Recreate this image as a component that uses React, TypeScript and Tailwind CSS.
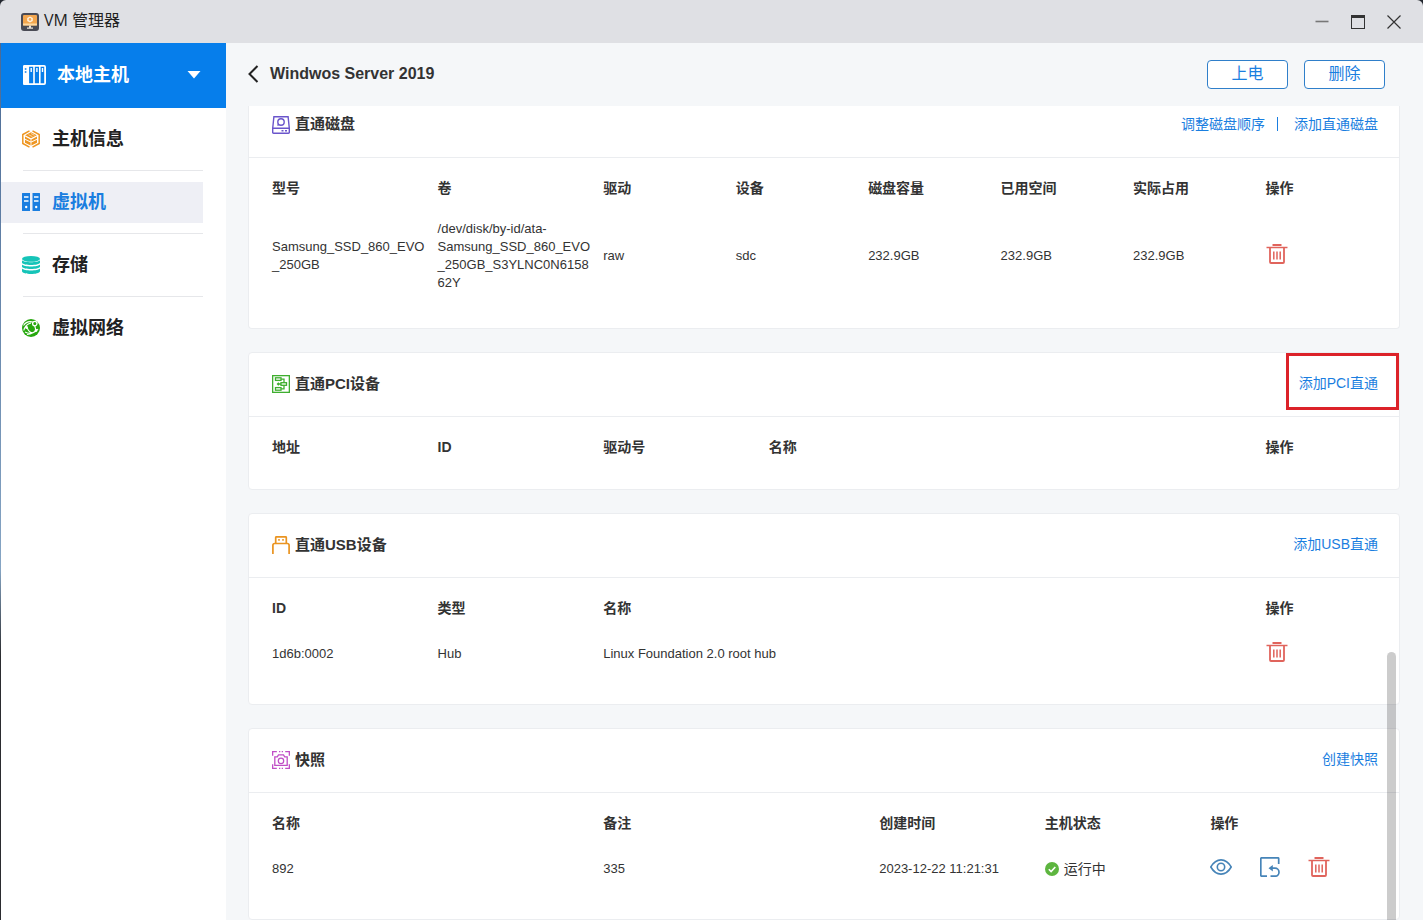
import type { ReactNode } from "react";

function AppLogo() {
  return (
    <svg width="18" height="18" viewBox="0 0 18 18" aria-hidden="true">
      <rect width="18" height="18" rx="3" fill="#4a4b55" />
      <rect x="2" y="2" width="14" height="10.5" rx="1" fill="#f3a64e" />
      <rect x="2" y="10.5" width="14" height="2" fill="#ffd9a0" />
      <path d="M9 3.4l2.8 1.5v3L9 9.400 6.200 7.900v-3z" fill="#fff1dc" />
      <circle cx="9" cy="6.400" r="1.300" fill="#f3a64e" />
      <path d="M8 12.500h2v2h2v1.200H6v-1.200h2z" fill="#e9e2d8" />
    </svg>
  );
}

function HostIcon() {
  return (
    <svg width="23" height="20" viewBox="0 0 23 20" fill="none" aria-hidden="true">
      <path d="M1.500 0H5V20H1.500A1.500 1.500 0 0 1 0 18.500V1.500A1.500 1.500 0 0 1 1.500 0z" fill="#fff" />
      <rect x="0.900" y="0.900" width="21.200" height="18.200" rx="1" stroke="#fff" strokeWidth="1.800" />
      <path d="M5.300 1v18M11 1v18M16.800 1v18" stroke="#fff" strokeWidth="1.600" />
      <path d="M8.200 3v4M13.900 3v4M19.500 3v4" stroke="#fff" strokeWidth="1.400" />
      <path d="M1.800 4h1.600M1.800 7h1.600" stroke="#067eeb" strokeWidth="1.300" />
    </svg>
  );
}

function InfoIcon() {
  return (
    <svg width="18" height="18" viewBox="0 0 18 18" fill="none" aria-hidden="true">
      <path d="M7.500 0.800L0.800 4.500v9L7.500 17.200M10.500 0.800L17.200 4.500v9L10.500 17.200" stroke="#ee9622" strokeWidth="1.500" />
      <path d="M9 2.200l5.800 3L9 8.200l-5.800-3z" fill="#ee9622" />
      <path d="M3 6.600l5.600 2.800v2.100L3 8.700zM15 6.600L9.400 9.400v2.100L15 8.700z" fill="#ee9622" />
      <path d="M3 9.700l5.600 2.800v3L3 12.700zM15 9.700l-5.600 2.800v3l5.600-2.800z" fill="#ee9622" />
      <path d="M6.500 4.700l4 2M9 3.500l3.500 1.800" stroke="#fff" strokeWidth="0.600" />
    </svg>
  );
}

function VmIcon() {
  return (
    <svg width="18" height="18" viewBox="0 0 18 18" aria-hidden="true">
      <path d="M0.500 0H8v18H0.500a.5.500 0 0 1-.5-.5V.5a.5.500 0 0 1 .5-.5zM10.500 0h7a.5.500 0 0 1 .5.500v17a.5.500 0 0 1-.5.500h-7z" fill="#1a7ee0" />
      <path d="M2 4h4.500M2 8h4.500M12 4h4.500M12 8h4.500" stroke="#fff" strokeWidth="1.400" />
      <circle cx="4.200" cy="14" r="1.200" fill="#fff" />
      <circle cx="14.200" cy="14" r="1.200" fill="#fff" />
    </svg>
  );
}

function StorageIcon() {
  return (
    <svg width="18" height="18" viewBox="0 0 18 18" fill="#16c4b8" aria-hidden="true">
      <ellipse cx="9" cy="2.900" rx="9" ry="2.900" />
      <path d="M0 4.300c2 2.600 16 2.600 18 0v2.500c-1 3-17 3-18 0z" />
      <path d="M0 8.500c2 2.600 16 2.600 18 0v2.300c-1 3-17 3-18 0z" />
      <path d="M0 12.500c2 2.600 16 2.600 18 0v2.700c-1 3.700-17 3.700-18 0z" />
    </svg>
  );
}

function NetworkIcon() {
  return (
    <svg width="18" height="18" viewBox="0 0 18 18" fill="none" aria-hidden="true">
      <circle cx="9" cy="9" r="9" fill="#27a80e" />
      <path d="M1.500 6.500C4 2.800 8 2 11.500 3.300M1.800 11.500C2.500 8 5 5 9 4M3 13c3.500 2 8 1.500 11.500-1.500M5 15.500c4-.2 8-2 11-5.500M12.500 6l1.500 5.500M5 8.500c1 2.500 2 4.500 5 5.500" stroke="#fff" strokeWidth="1.100" />
      <circle cx="4.500" cy="8.500" r="1.400" fill="#fff" />
      <circle cx="12.800" cy="4.600" r="2.200" fill="#27a80e" stroke="#fff" strokeWidth="1.300" />
      <circle cx="14" cy="11.500" r="1.400" fill="#fff" />
    </svg>
  );
}

function DiskIcon() {
  return (
    <svg width="18" height="18" viewBox="0 0 18 18" fill="none" stroke="#6a55cb" strokeWidth="1.400" aria-hidden="true">
      <path d="M1.900 0.700h14.200l1.200 11.500v4.300a0.800 0.800 0 0 1-.8.800h-15a0.800 0.800 0 0 1-.8-.8v-4.300z" />
      <path d="M0.700 12.200h16.600M9.500 14.800h2M13 14.800h2" />
      <circle cx="9" cy="6" r="3.200" />
      <path d="M6.800 8.200L5.500 9.500" />
    </svg>
  );
}

function PciIcon() {
  return (
    <svg width="18" height="18" viewBox="0 0 18 18" fill="none" stroke="#3fae2f" strokeWidth="1.300" aria-hidden="true">
      <rect x="0.650" y="0.650" width="16.700" height="16.700" />
      <rect x="3.500" y="2.800" width="5.500" height="2.600" />
      <rect x="9" y="7.700" width="5.500" height="2.600" />
      <rect x="3.500" y="12.600" width="5.500" height="2.600" />
      <path d="M9 4.100h3v3.600M12 10.300v3.600H9M9 9H6M6.800 7.700L5.500 9l1.300 1.300" />
    </svg>
  );
}

function UsbIcon() {
  return (
    <svg width="18" height="18" viewBox="0 0 18 18" fill="none" stroke="#ea9420" strokeWidth="1.700" aria-hidden="true">
      <path d="M3.700 7.500V1.600a0.800 0.800 0 0 1 .8-.8h9a0.800 0.800 0 0 1 .8.800v5.900" />
      <path d="M0.900 18V9.300A1.800 1.800 0 0 1 2.700 7.500h12.600a1.800 1.800 0 0 1 1.800 1.800V18" />
      <path d="M6.200 3.800h1.600M10.200 3.800h1.600" />
    </svg>
  );
}

function SnapshotIcon() {
  return (
    <svg width="18" height="18" viewBox="0 0 18 18" fill="none" stroke="#c04fc6" strokeWidth="1.300" aria-hidden="true">
      <path d="M0.650 4.800V0.650h4.200M13.200 0.650h4.150v4.200M17.350 13.200v4.150h-4.150M4.800 17.350H0.650v-4.150M7 .65h1.300M9.700.65H11M7 17.350h1.300M9.700 17.350H11" />
      <path d="M2.800 5.800h2.500l1.200-2h5l1.200 2h2.500v8.600H2.800z" />
      <circle cx="9" cy="9.900" r="2.700" />
    </svg>
  );
}

function TrashIcon() {
  return (
    <svg width="22" height="20" viewBox="0 0 22 20" fill="none" stroke="#e0645c" aria-hidden="true">
      <path d="M6.500 1h9" strokeWidth="2" />
      <path d="M0.500 3.500h21" strokeWidth="1.500" />
      <path d="M4 3.500v14.500a1 1 0 0 0 1 1h12a1 1 0 0 0 1-1V3.500" strokeWidth="1.800" />
      <path d="M7.800 7.500v8M11 7.500v8M14.200 7.500v8" strokeWidth="1.500" />
    </svg>
  );
}

function EyeIcon() {
  return (
    <svg width="22" height="16" viewBox="0 0 22 16" fill="none" stroke="#4684b8" strokeWidth="1.600" aria-hidden="true">
      <path d="M0.800 8C3.500 3.300 7 0.900 11 0.900S18.500 3.300 21.200 8C18.500 12.700 15 15.100 11 15.100S3.500 12.700 0.800 8z" />
      <circle cx="11" cy="8" r="3.700" />
    </svg>
  );
}

function RestoreIcon() {
  return (
    <svg width="20" height="20" viewBox="0 0 20 20" fill="none" stroke="#4684b8" strokeWidth="1.700" aria-hidden="true">
      <path d="M18.700 7V1.600a.8.800 0 0 0-.8-.8H1.600a.8.800 0 0 0-.8.800v16.800a.8.800 0 0 0 .8.800H7" />
      <path d="M10.500 11.200H15a4 4 0 0 1 0 8h-4.500" />
      <path d="M12.800 8v6.400L8.500 11.200z" fill="#4684b8" stroke="none" />
    </svg>
  );
}

const menu = [
  { label: "主机信息", icon: <InfoIcon /> },
  { label: "虚拟机", icon: <VmIcon />, active: true },
  { label: "存储", icon: <StorageIcon /> },
  { label: "虚拟网络", icon: <NetworkIcon /> },
];

function Sidebar() {
  return (
    <aside className="w-[225px] shrink-0 bg-white">
      <button className="flex h-[65px] w-full items-center bg-[#067eeb] pb-0.5 pl-[22px] pr-[25px] text-white">
        <HostIcon />
        <span className="ml-[11px] text-lg font-bold">本地主机</span>
        <svg className="ml-auto" width="14" height="8" viewBox="0 0 14 8" aria-hidden="true">
          <path d="M0.500 0h13L7 7.500z" fill="#fff" />
        </svg>
      </button>
      <nav>
        <ul>
          {menu.map((item) => (
            <li key={item.label} className="group mr-[23px] pt-[11px]">
              <a
                href="#"
                className={
                  item.active
                    ? "flex h-[41px] items-center gap-3 bg-[#eeeff5] pb-0.5 pl-[21px] text-lg font-bold text-[#1a7ee0]"
                    : "flex h-[41px] items-center gap-3 pb-0.5 pl-[21px] text-lg font-bold text-[#222]"
                }
              >
                {item.icon}
                {item.label}
              </a>
              <div className="ml-[22px] mt-2.5 border-b border-[#e6e7ea] group-last:hidden" />
            </li>
          ))}
        </ul>
      </nav>
    </aside>
  );
}

type SectionProps = {
  title: string;
  icon: ReactNode;
  actions: string[];
  scrolled?: boolean;
  marked?: boolean;
  children: ReactNode;
};

function Section({ title, icon, actions, scrolled, marked, children }: SectionProps) {
  return (
    <section
      className={
        scrolled
          ? "rounded-b border border-t-0 border-[#ebedf0] bg-white"
          : "rounded border border-[#ebedf0] bg-white"
      }
    >
      <div
        className={
          scrolled
            ? "flex h-[52px] items-center border-b border-[#ebedf0] pl-[23px] pr-[21px] pb-3.5"
            : "relative flex h-16 items-center border-b border-[#ebedf0] pl-[23px] pr-[21px] pb-px"
        }
      >
        {icon}
        <h2 className="ml-[5px] text-[15px] font-bold text-[#333]">{title}</h2>
        <div className="ml-auto flex items-center pb-0.5 text-sm text-[#1a7ee0]">
          {actions.map((action, i) => (
            <a key={action} href="#" className={i > 0 ? "ml-3 flex items-center gap-4" : ""}>
              {i > 0 && <span className="h-3.5 border-l border-[#1a7ee0]" />}
              {action}
            </a>
          ))}
        </div>
        {marked && (
          <div className="pointer-events-none absolute right-0 top-0 h-[57px] w-[113px] border-3 border-[#dc2229]" />
        )}
      </div>
      {children}
    </section>
  );
}

type TableProps = {
  columns: [string, string][];
  rows: ReactNode[][];
};

function DataTable({ columns, rows }: TableProps) {
  return (
    <div className={rows.length ? "px-[23px] pt-2 pb-7" : "px-[23px] pt-2 pb-[18px]"}>
      <table className="w-full table-fixed text-left text-[13px] leading-[18px] text-[#333]">
        <thead>
          <tr>
            {columns.map(([name, width]) => (
              <th key={name} className={`h-[46px] pb-0.5 text-sm leading-[18px] font-bold ${width}`}>
                {name}
              </th>
            ))}
          </tr>
        </thead>
        <tbody>
          {rows.map((row, i) => (
            <tr key={i}>
              {row.map((cell, j) => (
                <td key={j} className="h-11 py-2 pr-2 align-middle wrap-anywhere">
                  {cell}
                </td>
              ))}
            </tr>
          ))}
        </tbody>
      </table>
    </div>
  );
}

function DeleteButton() {
  return (
    <button aria-label="删除" className="block pb-1">
      <TrashIcon />
    </button>
  );
}

export default function App() {
  return (
    <div className="flex h-screen flex-col bg-[#22262e] font-['Liberation_Sans','Noto_Sans_CJK_SC',sans-serif]">
      <header className="flex h-[43px] shrink-0 items-center rounded-t-md bg-[#dfe0e4] pl-[21px] pr-[22px]">
        <AppLogo />
        <h1 className="ml-[5px] pb-[3px] font-['Open_Sans','Noto_Sans_CJK_SC',sans-serif] text-base text-[#222]">
          VM 管理器
        </h1>
        <div className="ml-auto flex items-center gap-[22px]">
          <button aria-label="最小化">
            <svg width="14" height="14" viewBox="0 0 14 14" aria-hidden="true">
              <path d="M0.500 6.500h13" stroke="#777" strokeWidth="1.600" />
            </svg>
          </button>
          <button aria-label="最大化">
            <svg width="14" height="14" viewBox="0 0 14 14" fill="none" stroke="#333" aria-hidden="true">
              <rect x="0.500" y="0.500" width="13" height="13" />
              <path d="M0 1.500h14" strokeWidth="3" />
            </svg>
          </button>
          <button aria-label="关闭">
            <svg width="14" height="14" viewBox="0 0 14 14" stroke="#333" strokeWidth="1.200" aria-hidden="true">
              <path d="M0.500 0.500l13 13M13.500 0.500l-13 13" />
            </svg>
          </button>
        </div>
      </header>

      <div className="flex min-h-0 flex-1">
        <div className="w-px shrink-0 bg-linear-to-b from-[#4b6a94] via-[#86a5c4] via-60% to-[#2b2c30] to-70%" />
        <Sidebar />

        <main className="relative flex min-w-0 flex-1 flex-col bg-[#f5f7f9] pl-[22px] pr-[23px]">
          <div className="flex h-[63px] shrink-0 items-center">
            <button aria-label="返回" className="pb-0.5">
              <svg width="11" height="18" viewBox="0 0 11 18" fill="none" stroke="#222" strokeWidth="2" aria-hidden="true">
                <path d="M9.500 1L1.500 9l8 8" />
              </svg>
            </button>
            <h1 className="ml-[11px] pb-0.5 text-base font-bold text-[#333]">Windwos Server 2019</h1>
            <div className="ml-auto mr-[15px] flex gap-4 text-base text-[#1a7ee0]">
              <button className="h-[29px] w-[81px] rounded border border-[#2f7fca] bg-white pb-0.5 leading-none">
                上电
              </button>
              <button className="h-[29px] w-[81px] rounded border border-[#2f7fca] bg-white pb-0.5 leading-none">
                删除
              </button>
            </div>
          </div>

          <div className="flex min-h-0 flex-1 flex-col gap-[23px] overflow-hidden">
            <Section title="直通磁盘" icon={<DiskIcon />} actions={["调整磁盘顺序", "添加直通磁盘"]} scrolled>
              <DataTable
                columns={[
                  ["型号", "w-[15%]"],
                  ["卷", "w-[15%]"],
                  ["驱动", "w-[12%]"],
                  ["设备", "w-[12%]"],
                  ["磁盘容量", "w-[12%]"],
                  ["已用空间", "w-[12%]"],
                  ["实际占用", "w-[12%]"],
                  ["操作", "w-[10%]"],
                ]}
                rows={[
                  [
                    "Samsung_SSD_860_EVO_250GB",
                    "/dev/disk/by-id/ata-Samsung_SSD_860_EVO_250GB_S3YLNC0N615862Y",
                    "raw",
                    "sdc",
                    "232.9GB",
                    "232.9GB",
                    "232.9GB",
                    <DeleteButton />,
                  ],
                ]}
              />
            </Section>

            <Section title="直通PCI设备" icon={<PciIcon />} actions={["添加PCI直通"]} marked>
              <DataTable
                columns={[
                  ["地址", "w-[15%]"],
                  ["ID", "w-[15%]"],
                  ["驱动号", "w-[15%]"],
                  ["名称", "w-[45%]"],
                  ["操作", "w-[10%]"],
                ]}
                rows={[]}
              />
            </Section>

            <Section title="直通USB设备" icon={<UsbIcon />} actions={["添加USB直通"]}>
              <DataTable
                columns={[
                  ["ID", "w-[15%]"],
                  ["类型", "w-[15%]"],
                  ["名称", "w-[60%]"],
                  ["操作", "w-[10%]"],
                ]}
                rows={[["1d6b:0002", "Hub", "Linux Foundation 2.0 root hub", <DeleteButton />]]}
              />
            </Section>

            <Section title="快照" icon={<SnapshotIcon />} actions={["创建快照"]}>
              <DataTable
                columns={[
                  ["名称", "w-[30%]"],
                  ["备注", "w-[25%]"],
                  ["创建时间", "w-[15%]"],
                  ["主机状态", "w-[15%]"],
                  ["操作", "w-[15%]"],
                ]}
                rows={[
                  [
                    "892",
                    "335",
                    "2023-12-22 11:21:31",
                    <span className="flex items-center gap-[5px] text-sm leading-[18px]">
                      <svg width="14" height="14" viewBox="0 0 14 14" aria-hidden="true">
                        <circle cx="7" cy="7" r="7" fill="#5db53f" />
                        <path d="M3.800 7.200l2.300 2.300 4.200-4.500" fill="none" stroke="#fff" strokeWidth="1.600" />
                      </svg>
                      运行中
                    </span>,
                    <div className="flex items-center gap-7">
                      <button aria-label="查看" className="pb-1">
                        <EyeIcon />
                      </button>
                      <button aria-label="恢复" className="pb-1">
                        <RestoreIcon />
                      </button>
                      <DeleteButton />
                    </div>,
                  ],
                ]}
              />
            </Section>
          </div>

          {/* scrollbar thumb */}
          <div className="absolute bottom-0 right-[27px] h-[268px] w-[9px] rounded-t-full bg-black/20" />
        </main>
      </div>
    </div>
  );
}
